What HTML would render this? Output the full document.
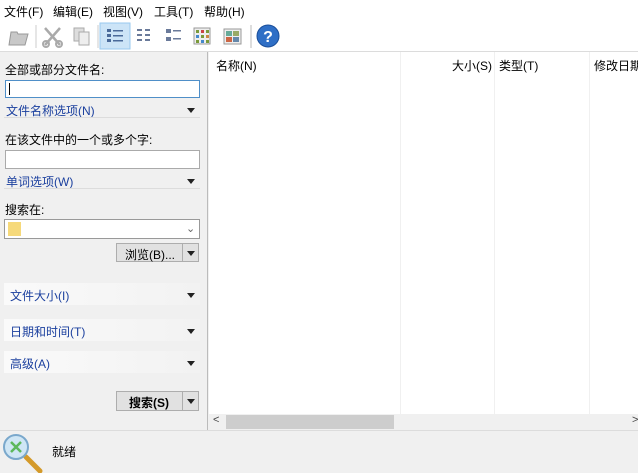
<!DOCTYPE html>
<html><head><meta charset="utf-8"><style>
*{margin:0;padding:0;box-sizing:border-box}
body{width:638px;height:473px;overflow:hidden;background:#f0f0f0;font-family:"Liberation Sans","Noto Sans CJK SC",sans-serif;font-size:12px;color:#000;position:relative}
.a{position:absolute}
.blue{color:#1a3f9e}
.tri{position:absolute;width:0;height:0;border-left:4px solid transparent;border-right:4px solid transparent;border-top:5px solid #222}
.band{position:absolute;left:4px;width:196px;height:22px;background:linear-gradient(90deg,#fafafa,#f2f2f2)}
.btn{position:absolute;border:1px solid #adadad;background:#e1e1e1}
</style></head><body>
<div class="a" style="left:0;top:0;width:638px;height:20px;background:#fff"></div>
<div class="a" style="left:4px;top:3px">文件(F)</div>
<div class="a" style="left:53px;top:3px">编辑(E)</div>
<div class="a" style="left:103px;top:3px">视图(V)</div>
<div class="a" style="left:154px;top:3px">工具(T)</div>
<div class="a" style="left:204px;top:3px">帮助(H)</div>
<div class="a" style="left:0;top:20px;width:638px;height:31px;background:#fff"></div>
<!-- toolbar icons -->
<svg class="a" style="left:0;top:20px" width="290" height="31">
<path d="M9 25 L11 12 L17 12 L18 14 L28 14 L25 25Z" fill="#c8c8c8" stroke="#999"/>
<line x1="36" y1="5" x2="36" y2="28" stroke="#ccc"/>
<path d="M45 8 L60 25 M60 8 L45 25" stroke="#aaa" stroke-width="2.5"/>
<circle cx="46" cy="24" r="3" fill="none" stroke="#aaa" stroke-width="2"/><circle cx="59" cy="24" r="3" fill="none" stroke="#aaa" stroke-width="2"/>
<rect x="74" y="8" width="10" height="13" fill="#ddd" stroke="#aaa"/><rect x="79" y="12" width="10" height="13" fill="#eee" stroke="#aaa"/>
<line x1="98" y1="5" x2="98" y2="28" stroke="#ccc"/>
<rect x="100" y="3" width="30" height="26" fill="#cce4f7" stroke="#99c9ef"/>
<g fill="#4a6a9a"><rect x="107" y="9" width="4" height="3"/><rect x="113" y="10" width="10" height="1.5"/><rect x="107" y="14" width="4" height="3"/><rect x="113" y="15" width="10" height="1.5"/><rect x="107" y="19" width="4" height="3"/><rect x="113" y="20" width="10" height="1.5"/></g>
<g fill="#6a7a9a"><rect x="137" y="9" width="5" height="2"/><rect x="145" y="9" width="5" height="2"/><rect x="137" y="14" width="5" height="2"/><rect x="145" y="14" width="5" height="2"/><rect x="137" y="19" width="5" height="2"/><rect x="145" y="19" width="5" height="2"/></g>
<g fill="#6a7a9a"><rect x="166" y="9" width="5" height="4"/><rect x="173" y="10" width="8" height="1.5"/><rect x="166" y="17" width="5" height="4"/><rect x="173" y="18" width="8" height="1.5"/></g>
<rect x="194" y="8" width="16" height="16" fill="#eee" stroke="#999"/><g fill="#7a9a3a"><rect x="196" y="10" width="3" height="3"/><rect x="201" y="10" width="3" height="3" fill="#c44"/><rect x="206" y="10" width="3" height="3"/><rect x="196" y="15" width="3" height="3" fill="#48c"/><rect x="201" y="15" width="3" height="3"/><rect x="206" y="15" width="3" height="3" fill="#c84"/><rect x="196" y="20" width="3" height="3"/><rect x="201" y="20" width="3" height="3" fill="#48c"/><rect x="206" y="20" width="3" height="3"/></g>
<rect x="224" y="9" width="17" height="15" fill="#eee" stroke="#999"/><rect x="226" y="11" width="6" height="5" fill="#6a9"/><rect x="233" y="11" width="6" height="5" fill="#9a6"/><rect x="226" y="17" width="6" height="5" fill="#c64"/><rect x="233" y="17" width="6" height="5" fill="#68a"/>
<line x1="251" y1="5" x2="251" y2="28" stroke="#bbb"/>
<circle cx="268" cy="16" r="11" fill="#2f6fc6" stroke="#1a4e9a"/>
<text x="268" y="22" font-size="16" font-weight="bold" fill="#fff" text-anchor="middle" font-family="Liberation Sans">?</text>
</svg>
<!-- left panel -->
<div class="a" style="left:0;top:51px;width:638px;height:1px;background:#dcdcdc"></div>
<div class="a" style="left:5px;top:61px">全部或部分文件名:</div>
<div class="a" style="left:5px;top:80px;width:195px;height:18px;background:#fff;border:1px solid #4f8fc8"></div>
<div class="a" style="left:9px;top:83px;width:1px;height:12px;background:#000"></div>
<div class="a blue" style="left:6px;top:102px">文件名称选项(N)</div><div class="tri" style="left:187px;top:108px"></div>
<div class="a" style="left:4px;top:117px;width:196px;height:1px;background:#dcdcdc"></div>
<div class="a" style="left:5px;top:131px">在该文件中的一个或多个字:</div>
<div class="a" style="left:5px;top:150px;width:195px;height:19px;background:#fff;border:1px solid #aaa"></div>
<div class="a blue" style="left:6px;top:173px">单词选项(W)</div><div class="tri" style="left:187px;top:179px"></div>
<div class="a" style="left:4px;top:188px;width:196px;height:1px;background:#dcdcdc"></div>
<div class="a" style="left:5px;top:201px">搜索在:</div>
<div class="a" style="left:4px;top:219px;width:196px;height:20px;background:#fff;border:1px solid #999"></div>
<div class="a" style="left:8px;top:222px;width:13px;height:14px;background:#f6d97a"></div>
<div class="a" style="left:186px;top:222px;color:#666;font-size:11px">⌄</div>
<div class="btn" style="left:116px;top:243px;width:67px;height:19px"></div>
<div class="btn" style="left:182px;top:243px;width:17px;height:19px"></div>
<div class="a" style="left:125px;top:246px">浏览(B)...</div><div class="tri" style="left:187px;top:251px"></div>
<div class="band" style="top:283px"></div><div class="a blue" style="left:10px;top:287px">文件大小(I)</div><div class="tri" style="left:187px;top:293px"></div>
<div class="band" style="top:319px"></div><div class="a blue" style="left:10px;top:323px">日期和时间(T)</div><div class="tri" style="left:187px;top:329px"></div>
<div class="band" style="top:351px"></div><div class="a blue" style="left:10px;top:355px">高级(A)</div><div class="tri" style="left:187px;top:361px"></div>
<div class="btn" style="left:116px;top:391px;width:67px;height:20px"></div>
<div class="btn" style="left:182px;top:391px;width:17px;height:20px"></div>
<div class="a" style="left:129px;top:394px;font-weight:bold">搜索(S)</div><div class="tri" style="left:187px;top:399px"></div>
<!-- list -->
<div class="a" style="left:207px;top:52px;width:1px;height:378px;background:#bbb"></div>
<div class="a" style="left:209px;top:52px;width:429px;height:362px;background:#fff"></div>
<div class="a" style="left:400px;top:52px;width:1px;height:362px;background:#f0f0f0"></div>
<div class="a" style="left:494px;top:52px;width:1px;height:362px;background:#f0f0f0"></div>
<div class="a" style="left:589px;top:52px;width:1px;height:362px;background:#f0f0f0"></div>
<div class="a" style="left:216px;top:57px">名称(N)</div>
<div class="a" style="left:452px;top:57px">大小(S)</div>
<div class="a" style="left:499px;top:57px">类型(T)</div>
<div class="a" style="left:594px;top:57px;white-space:nowrap">修改日期</div>
<div class="a" style="left:209px;top:414px;width:429px;height:16px;background:#f0f0f0"></div>
<div class="a" style="left:226px;top:415px;width:168px;height:14px;background:#cdcdcd"></div>
<div class="a" style="left:213px;top:414px;font-size:11px;color:#444">&lt;</div>
<div class="a" style="left:632px;top:414px;font-size:11px;color:#444">&gt;</div>
<div class="a" style="left:0;top:430px;width:638px;height:1px;background:#dcdcdc"></div>
<svg class="a" style="left:0;top:431px" width="50" height="42">
<line x1="26" y1="26" x2="40" y2="40" stroke="#d49a2a" stroke-width="5" stroke-linecap="round"/>
<circle cx="16" cy="16" r="12" fill="#cfe6f5" stroke="#7aa8cc" stroke-width="2"/>
<path d="M11 11 L21 21 M21 11 L11 21" stroke="#5cb85c" stroke-width="2.5"/>
</svg>
<div class="a" style="left:52px;top:443px">就绪</div>
</body></html>
